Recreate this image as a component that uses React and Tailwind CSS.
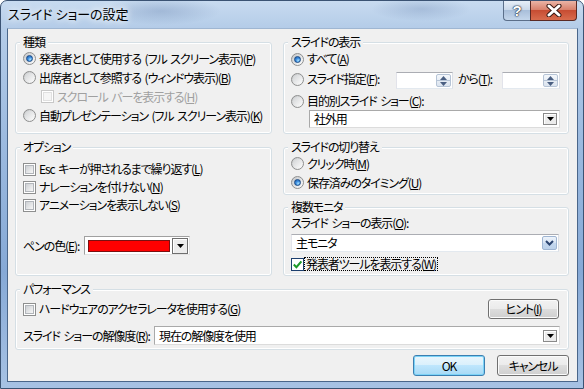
import React from "react";

const Radio = ({ checked }) => (
  <span className="flex h-[13px] w-[13px] shrink-0 items-center justify-center rounded-full border border-[#8e8f8f] bg-[linear-gradient(135deg,#c4c6c8,#ffffff)]">
    {checked ? (
      <span className="h-[7px] w-[7px] rounded-full border border-[#1a4a85] bg-[radial-gradient(circle_at_65%_70%,#a8e4ff_0%,#3d8ee0_45%,#1b5aa8_100%)]" />
    ) : (
      <span className="h-[9px] w-[9px] rounded-full bg-[linear-gradient(135deg,#d2d4d6,#fbfbfb)]" />
    )}
  </span>
);

const Check = ({ checked, disabled }) => (
  <span
    className={
      "flex h-[13px] w-[13px] shrink-0 items-center justify-center border bg-white " +
      (disabled ? "border-[#c8c8c8]" : checked ? "border-[#1c3f6e]" : "border-[#8e8f8f]")
    }
  >
    {checked ? (
      <svg width="11" height="11" viewBox="0 0 11 11">
        <path d="M1.8 5.6 L4.4 8.2 L9.4 2.4" fill="none" stroke="#1f9a2a" strokeWidth="2.1" />
      </svg>
    ) : (
      <span
        className={
          "h-[9px] w-[9px] border " +
          (disabled
            ? "border-[#e0e0e0] bg-[#f5f5f5]"
            : "border-[#b1b5ba] bg-[linear-gradient(135deg,#cdd0d4,#f7f7f7)]")
        }
      />
    )}
  </span>
);

const Tri = () => (
  <svg width="7" height="4" viewBox="0 0 7 4">
    <path d="M0 0 H7 L3.5 4 Z" fill="#000" />
  </svg>
);

const U = ({ children }) => <u className="underline decoration-1 underline-offset-[1px]">{children}</u>;

const Group = ({ title, className, children }) => (
  <fieldset className={"min-w-0 rounded-[3px] border border-[#d5dfe5] shadow-[inset_0_0_0_1px_#ffffff] " + className}>
    <legend className="ml-[4px] bg-[#f0f0f0] px-[3px] text-[12px] leading-[14px]">{title}</legend>
    {children}
  </fieldset>
);

const Spin = ({ className }) => (
  <div className={"flex h-[17px] items-stretch border border-[#abadb3] border-b-[#e3e9ef] border-l-[#e2e3ea] border-r-[#dbdfe6] bg-white " + className}>
    <div className="flex-1" />
    <div className="my-[1px] mr-[1px] flex w-[15px] flex-col rounded-[2px] border border-[#b6c4d6] bg-[linear-gradient(to_bottom,#f4f7fb,#dbe4ef)]">
      <div className="flex flex-1 items-center justify-center border-b border-[#b6c4d6]">
        <svg width="7" height="4" viewBox="0 0 7 4">
          <path d="M0 4 H7 L3.5 0 Z" fill="#4a5f82" />
        </svg>
      </div>
      <div className="flex flex-1 items-center justify-center">
        <svg width="7" height="4" viewBox="0 0 7 4">
          <path d="M0 0 H7 L3.5 4 Z" fill="#4a5f82" />
        </svg>
      </div>
    </div>
  </div>
);

const OldCombo = ({ text, className }) => (
  <div className={"flex items-center border border-[#a9a9a9] border-r-[#dcdcdc] border-b-[#dcdcdc] bg-white pl-[4px] pr-[2px] " + className}>
    <span className="flex-1 text-[12px] leading-[14px]">{text}</span>
    <span className="flex h-[12px] w-[14px] items-center justify-center border border-[#8a8a8a] bg-[#ececec] shadow-[inset_1px_1px_0_#ffffff]">
      <Tri />
    </span>
  </div>
);

const WinButton = ({ children, className, def }) => (
  <div
    className={
      "flex items-center justify-center rounded-[3px] border text-[12px] leading-[14px] " +
      (def
        ? "border-[#3c7fb1] bg-[linear-gradient(to_bottom,#eaf6fd_0%,#d9f0fc_50%,#bee6fd_50%,#a7d9f5_100%)] shadow-[inset_0_0_0_1px_#7cd3f7] "
        : "border-[#707070] bg-[linear-gradient(to_bottom,#f2f2f2_0%,#ebebeb_50%,#dddddd_50%,#cfcfcf_100%)] shadow-[inset_0_0_0_1px_#fbfbfb] ") +
      className
    }
  >
    {children}
  </div>
);

const Row = ({ className, children }) => <div className={"flex items-center " + (className || "")}>{children}</div>;

export default function App() {
  return (
    <div className="h-[389px] w-[584px] overflow-hidden whitespace-nowrap rounded-t-[7px] border border-[#3b5373] bg-[linear-gradient(to_bottom,#c8dbf0_0%,#b4cce8_7%,#9dbbe0_35%,#86a9d6_70%,#a7c2e4_100%)] font-['Noto_Sans_CJK_JP',sans-serif] text-[12px] text-black [font-feature-settings:'palt']">
      {/* title bar */}
      <div className="flex h-[27px] items-start justify-between bg-[radial-gradient(ellipse_60px_14px_at_160px_10px,rgba(70,100,150,0.25),transparent),radial-gradient(ellipse_50px_12px_at_420px_8px,rgba(70,100,150,0.22),transparent)]">
        <div className="pl-[7px] pt-[5px] text-[13px] leading-[16px] [text-shadow:0_0_6px_#ffffff,0_0_10px_#ffffff]">
          スライド ショーの設定
        </div>
        <div className="mr-[6px] flex">
          <div className="flex h-[20px] w-[27px] items-center justify-center rounded-bl-[4px] border border-t-0 border-r-0 border-[#5b6f8a] bg-[linear-gradient(to_bottom,#e6eef8_0%,#cbd9ea_45%,#a9bfda_50%,#c4d6eb_100%)] font-['Liberation_Sans',sans-serif] text-[15px] font-bold leading-[15px] text-white [text-shadow:0_0_1px_#1d2b40,0_0_2px_#1d2b40,0_0_1px_#1d2b40]">
            ?
          </div>
          <div className="flex h-[20px] w-[47px] items-center justify-center rounded-br-[4px] border border-t-0 border-[#5a2a24] bg-[linear-gradient(to_bottom,#eab4a6_0%,#d9826d_45%,#c74d33_50%,#d86c4e_100%)]">
            <svg width="16" height="13" viewBox="0 0 16 13">
              <path d="M3 2 L13 11 M13 2 L3 11" stroke="#3a1a14" strokeWidth="5" strokeLinecap="round" />
              <path d="M3 2 L13 11 M13 2 L3 11" stroke="#ffffff" strokeWidth="3" strokeLinecap="round" />
            </svg>
          </div>
        </div>
      </div>

      {/* client area */}
      <div className="ml-[6px] mr-[5px] h-[354px] border border-[#4a668a] border-t-[#9fb6d2] bg-[#f0f0f0] pl-[7px] pr-[8px] pt-[6px] tracking-[-1.1px] [word-spacing:2px]">
        <div className="flex gap-[11px]">
          {/* left column */}
          <div className="flex w-[257px] flex-col gap-[6px]">
            <Group title="種類" className="h-[99px]">
              <div className="flex flex-col pl-[7px]">
                <Row className="h-[19px] gap-[3px]">
                  <Radio checked />
                  <span>発表者として使用する (フル スクリーン表示)(<U>P</U>)</span>
                </Row>
                <Row className="h-[19px] gap-[3px]">
                  <Radio />
                  <span>出席者として参照する (ウィンドウ表示)(<U>B</U>)</span>
                </Row>
                <Row className="h-[19px] gap-[3px] pl-[18px] text-[#a0a0a0]">
                  <Check disabled />
                  <span>スクロール バーを表示する(<U>H</U>)</span>
                </Row>
                <Row className="h-[19px] gap-[3px]">
                  <Radio />
                  <span>自動プレゼンテーション (フル スクリーン表示)(<U>K</U>)</span>
                </Row>
              </div>
            </Group>
            <Group title="オプション" className="h-[136px]">
              <div className="flex flex-col pl-[7px] pt-[6px]">
                <Row className="h-[18px] gap-[3px]">
                  <Check />
                  <span>Esc キーが押されるまで繰り返す(<U>L</U>)</span>
                </Row>
                <Row className="h-[18px] gap-[3px]">
                  <Check />
                  <span>ナレーションを付けない(<U>N</U>)</span>
                </Row>
                <Row className="h-[18px] gap-[3px]">
                  <Check />
                  <span>アニメーションを表示しない(<U>S</U>)</span>
                </Row>
                <Row className="mt-[22px] h-[19px]">
                  <span className="w-[61px]">ペンの色(<U>E</U>):</span>
                  <div className="flex h-[19px] w-[106px] items-center gap-[2px] border border-[#a0a0a0] border-b-[#e3e3e3] border-r-[#e3e3e3] bg-white pl-[3px]">
                    <span className="h-[12px] w-[82px] border border-[#7a1010] bg-[#ff0000]" />
                    <span className="flex h-[16px] w-[16px] items-center justify-center border border-[#6f6f6f] bg-[#ececec] shadow-[inset_1px_1px_0_#ffffff]">
                      <Tri />
                    </span>
                  </div>
                </Row>
              </div>
            </Group>
          </div>

          {/* right column */}
          <div className="flex w-[286px] flex-col">
            <Group title="スライドの表示" className="h-[99px]">
              <div className="flex flex-col pl-[7px]">
                <Row className="mt-[1px] h-[18px] gap-[3px]">
                  <Radio checked />
                  <span>すべて(<U>A</U>)</span>
                </Row>
                <div className="mt-[1px] flex h-[20px]">
                  <Row className="w-[105px] gap-[3px] self-center">
                    <Radio />
                    <span>スライド指定(<U>F</U>):</span>
                  </Row>
                  <Spin className="w-[57px] self-end" />
                  <span className="w-[49px] self-center pl-[5px]">から(<U>T</U>):</span>
                  <Spin className="w-[58px] self-end" />
                </div>
                <Row className="mt-[3px] h-[18px] gap-[3px]">
                  <Radio />
                  <span>目的別スライド ショー(<U>C</U>):</span>
                </Row>
                <OldCombo text="社外用" className="ml-[18px] h-[18px] w-[251px]" />
              </div>
            </Group>
            <Group title="スライドの切り替え" className="mt-[6px] h-[55px]">
              <div className="flex flex-col pl-[7px]">
                <Row className="h-[19px] gap-[3px]">
                  <Radio />
                  <span>クリック時(<U>M</U>)</span>
                </Row>
                <Row className="h-[19px] gap-[3px]">
                  <Radio checked />
                  <span>保存済みのタイミング(<U>U</U>)</span>
                </Row>
              </div>
            </Group>
            <Group title="複数モニタ" className="mt-[5px] h-[76px]">
              <div className="flex flex-col pl-[7px]">
                <Row className="mt-[1px] h-[15px]">
                  <span>スライド ショーの表示(<U>O</U>):</span>
                </Row>
                <div className="mt-[4px] flex h-[18px] w-[268px] items-center border border-[#abadb3] border-b-[#e3e9ef] border-l-[#e2e3ea] border-r-[#dbdfe6] bg-white pl-[4px] pr-[1px]">
                  <span className="flex-1">主モニタ</span>
                  <span className="flex h-[14px] w-[15px] items-center justify-center rounded-[2px] border border-[#9fb5d2] bg-[linear-gradient(to_bottom,#eef4fb_0%,#d6e3f3_50%,#c5d8ef_50%,#bcd1ea_100%)]">
                    <svg width="9" height="6" viewBox="0 0 9 6">
                      <path d="M1 1 L4.5 4.5 L8 1" fill="none" stroke="#2b4470" strokeWidth="2" />
                    </svg>
                  </span>
                </div>
                <Row className="mt-[3px] h-[18px]">
                  <Check checked />
                  <span className="border border-dotted border-black px-[1px] leading-[12px]">発表者ツールを表示する(<U>W</U>)</span>
                </Row>
              </div>
            </Group>
          </div>
        </div>

        {/* performance */}
        <Group title="パフォーマンス" className="mt-[6px] h-[68px]">
          <div className="flex flex-col pl-[7px] pr-[8px] pt-[3px]">
            <div className="flex h-[20px] items-center justify-between">
              <Row className="gap-[3px]">
                <Check />
                <span>ハードウェアのアクセラレータを使用する(<U>G</U>)</span>
              </Row>
              <WinButton className="mr-[1px] h-[20px] w-[71px]">
                ヒント(<U>I</U>)
              </WinButton>
            </div>
            <Row className="mt-[7px] h-[19px]">
              <span className="w-[131px] shrink-0">スライド ショーの解像度(<U>R</U>):</span>
              <OldCombo text="現在の解像度を使用" className="h-[19px] flex-1" />
            </Row>
          </div>
        </Group>

        <div className="mt-[5px] flex justify-end gap-[12px]">
          <WinButton def className="h-[21px] w-[72px]">
            OK
          </WinButton>
          <WinButton className="h-[21px] w-[72px]">キャンセル</WinButton>
        </div>
      </div>
    </div>
  );
}
